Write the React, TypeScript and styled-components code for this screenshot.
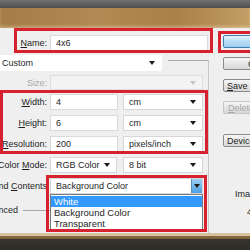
import React from 'react';
import styled, { createGlobalStyle } from 'styled-components';

const Global = createGlobalStyle`
  html, body { margin: 0; padding: 0; }
  body { font-family: "Liberation Sans", Arial, sans-serif; font-size: 9px; color: #1e1e1e; }
`;

const Screen = styled.div`
  width: 250px;
  height: 250px;
  overflow: hidden;
  display: flex;
  flex-direction: column;
  position: relative;
`;

const TopBar = styled.div`
  height: 8px;
  background: linear-gradient(#707070, #4e4e4e);
`;

const Caption = styled.div`
  height: 20px;
  background: linear-gradient(90deg, #a47c46 0%, #b08a52 40%, #a88048 70%, #c29e66 100%);
  box-shadow: inset 0 -2px 3px rgba(255, 235, 200, 0.35);
`;

const Dialog = styled.div`
  height: 205px;
  background: #efefef;
  display: flex;
  position: relative;
`;

const Form = styled.div`
  width: 208px;
  display: flex;
  flex-direction: column;
  padding-top: 7px;
  position: relative;
`;

const Row = styled.div<{ $top?: number; $h?: number }>`
  display: flex;
  align-items: center;
  height: ${(p) => p.$h ?? 16}px;
  margin-top: ${(p) => p.$top ?? 5}px;
  white-space: nowrap;
`;

const Label = styled.div<{ $muted?: boolean; $w?: number }>`
  width: ${(p) => p.$w ?? 47}px;
  margin-right: 3px;
  display: flex;
  justify-content: flex-end;
  white-space: nowrap;
  flex-shrink: 0;
  color: ${(p) => (p.$muted ? '#a9a9a9' : '#1e1e1e')};
`;

const Input = styled.div<{ $w: number }>`
  width: ${(p) => p.$w}px;
  height: 100%;
  box-sizing: border-box;
  background: #fff;
  border: 1px solid #dadada;
  padding-left: 5px;
  display: flex;
  align-items: center;
`;

const Select = styled.div<{ $w: number; $ml?: number; $disabled?: boolean; $bare?: boolean }>`
  width: ${(p) => p.$w}px;
  margin-left: ${(p) => p.$ml ?? 0}px;
  height: 100%;
  box-sizing: border-box;
  background: ${(p) => (p.$disabled ? '#f3f3f3' : '#fff')};
  border: 1px solid ${(p) => (p.$bare ? 'transparent' : p.$disabled ? '#dedede' : '#d6d6d6')};
  padding-left: 5px;
  padding-right: 6px;
  display: flex;
  align-items: center;
  justify-content: space-between;
  position: relative;
`;

const Arrow = styled.span<{ $muted?: boolean }>`
  width: 0;
  height: 0;
  border-left: 3px solid transparent;
  border-right: 3px solid transparent;
  border-top: 4px solid ${(p) => (p.$muted ? '#c4c4c4' : '#1a1a1a')};
`;

const ArrowButton = styled.span`
  position: absolute;
  right: 0;
  top: 0;
  bottom: 0;
  width: 10px;
  background: linear-gradient(#9fd0f5, #4d9fe0);
  border-left: 1px solid #5b8fc0;
  display: flex;
  align-items: center;
  justify-content: center;
`;

const GroupLine = styled.div`
  position: absolute;
  left: 168px;
  top: 32px;
  width: 40px;
  height: 174px;
  border-top: 1px solid #a8a8a8;
  border-right: 1px solid #c8c8c8;
`;

const List = styled.div`
  position: absolute;
  left: 50px;
  top: 166px;
  width: 153px;
  height: 36px;
  box-sizing: border-box;
  background: #fff;
  border: 1px solid #7a7a7a;
  display: flex;
  flex-direction: column;
  padding-top: 1px;
  z-index: 2;
  font-size: 9.5px;
`;

const Item = styled.div<{ $active?: boolean }>`
  height: 11px;
  line-height: 11px;
  padding-left: 3px;
  background: ${(p) => (p.$active ? '#3399ff' : 'transparent')};
  color: ${(p) => (p.$active ? '#fff' : '#1e1e1e')};
`;

const Advanced = styled.div`
  display: flex;
  align-items: center;
  margin-top: 10px;
  height: 12px;
`;

const Rule = styled.span`
  width: 28px;
  height: 1px;
  background: #a8a8a8;
  margin-left: 2px;
`;

const Side = styled.div`
  flex: 1;
  display: flex;
  flex-direction: column;
  padding-left: 15px;
  padding-top: 7px;
  position: relative;
`;

const Button = styled.div<{ $top: number; $pad: number; $primary?: boolean; $disabled?: boolean }>`
  width: 84px;
  height: 11px;
  flex-shrink: 0;
  box-sizing: content-box;
  margin-top: ${(p) => p.$top}px;
  padding-left: ${(p) => p.$pad}px;
  border: 1px solid ${(p) => (p.$primary ? '#3c7fb1' : p.$disabled ? '#c6c6c6' : '#8a8a8a')};
  border-radius: 2px;
  background: ${(p) =>
    p.$primary
      ? 'linear-gradient(#e6f4fd, #b6dcf5 50%, #9fd0f0)'
      : 'linear-gradient(#f6f6f6, #e6e6e6 50%, #d8d8d8)'};
  color: ${(p) => (p.$disabled ? '#a8a8a8' : '#1e1e1e')};
  display: flex;
  align-items: center;
  white-space: nowrap;
`;

const Info = styled.div<{ $top: number; $left: number }>`
  margin-top: ${(p) => p.$top}px;
  margin-left: ${(p) => p.$left}px;
  white-space: nowrap;
  line-height: 12px;
`;

const Mark = styled.div<{ $x: number; $y: number; $w: number; $h: number }>`
  position: absolute;
  left: ${(p) => p.$x}px;
  top: ${(p) => p.$y}px;
  width: ${(p) => p.$w}px;
  height: ${(p) => p.$h}px;
  box-sizing: border-box;
  border: 3px solid #d7212e;
  pointer-events: none;
  z-index: 3;
`;

const Ground = styled.div`
  flex: 1;
  background: linear-gradient(#d4c29e 0, #d4c29e 3px, #8a6a3e 3px, #7a5c34 6px, #38342f 6px, #2f2c28 100%);
`;

export default function App() {
  return (
    <Screen>
      <Global />
      <TopBar />
      <Caption />
      <Dialog>
        <Form>
          <Row $top={0}>
            <Label><span><u>N</u>ame:</span></Label>
            <Input $w={158}>4x6</Input>
          </Row>
          <Row $top={4}>
            <Select $w={166} $ml={-4} $bare>
              <span>Custom</span>
              <Arrow />
            </Select>
          </Row>
          <Row $top={4} $h={15}>
            <Label $muted>Size:</Label>
            <Select $w={153} $disabled>
              <span />
              <Arrow $muted />
            </Select>
          </Row>
          <Row $top={4}>
            <Label><span><u>W</u>idth:</span></Label>
            <Input $w={68}>4</Input>
            <Select $w={80} $ml={5}>
              <span>cm</span>
              <Arrow />
            </Select>
          </Row>
          <Row>
            <Label><span><u>H</u>eight:</span></Label>
            <Input $w={68}>6</Input>
            <Select $w={80} $ml={5}>
              <span>cm</span>
              <Arrow />
            </Select>
          </Row>
          <Row>
            <Label><span><u>R</u>esolution:</span></Label>
            <Input $w={68}>200</Input>
            <Select $w={80} $ml={5}>
              <span>pixels/inch</span>
              <Arrow />
            </Select>
          </Row>
          <Row>
            <Label><span>Color <u>M</u>ode:</span></Label>
            <Select $w={67}>
              <span>RGB Color</span>
              <Arrow />
            </Select>
            <Select $w={80} $ml={6}>
              <span>8 bit</span>
              <Arrow />
            </Select>
          </Row>
          <Row>
            <Label><span>Background <u>C</u>ontents</span></Label>
            <Select $w={153}>
              <span>Background Color</span>
              <ArrowButton><Arrow /></ArrowButton>
            </Select>
          </Row>
          <Advanced>
            <Label $w={18}>Advanced</Label>
            <Rule />
          </Advanced>
          <GroupLine />
          <List>
            <Item $active>White</Item>
            <Item>Background Color</Item>
            <Item>Transparent</Item>
          </List>
        </Form>
        <Side>
          <Button $top={0} $pad={0} $primary />
          <Button $top={9} $pad={24}>Cancel</Button>
          <Button $top={9} $pad={3}><span><u>S</u>ave Preset...</span></Button>
          <Button $top={9} $pad={4} $disabled><span><u>D</u>elete Preset...</span></Button>
          <Button $top={20} $pad={3}><span>Device Central...</span></Button>
          <Info $top={41} $left={12}>Image Size:</Info>
          <Info $top={6} $left={24}>4.4M</Info>
        </Side>
        <Mark $x={14} $y={0} $w={199} $h={25} />
        <Mark $x={218} $y={3} $w={40} $h={22} />
        <Mark $x={0} $y={62} $w={208} $h={64} />
        <Mark $x={46} $y={147} $w={161} $h={57} />
      </Dialog>
      <Ground />
    </Screen>
  );
}
